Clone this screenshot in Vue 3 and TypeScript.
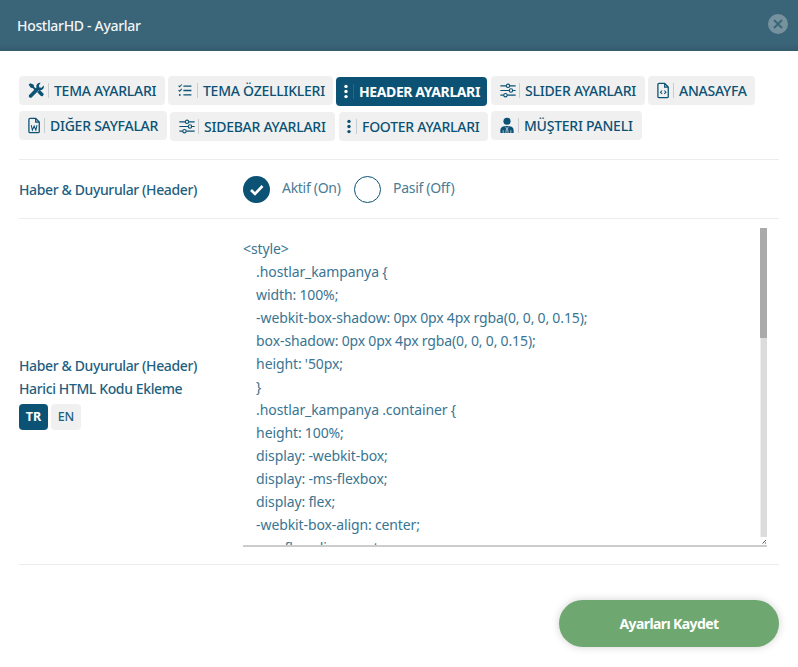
<script setup lang="ts">
interface Tab { label: string; icon: string; width: number; active?: boolean; nudge?: boolean; spaced?: boolean }
const tabs: Tab[] = [
  { label: 'TEMA AYARLARI', icon: 'tools', width: 146 },
  { label: 'TEMA ÖZELLIKLERI', icon: 'list', width: 165 },
  { label: 'HEADER AYARLARI', icon: 'dots', width: 151, active: true, spaced: true },
  { label: 'SLIDER AYARLARI', icon: 'sliders', width: 154 },
  { label: 'ANASAYFA', icon: 'code', width: 107 },
  { label: 'DIĞER SAYFALAR', icon: 'word', width: 148 },
  { label: 'SIDEBAR AYARLARI', icon: 'sliders', width: 165, nudge: true, spaced: true },
  { label: 'FOOTER AYARLARI', icon: 'dots', width: 149, nudge: true },
  { label: 'MÜŞTERI PANELI', icon: 'user', width: 151 },
]
const viewBoxes: Record<string, string> = {
  tools: '0 0 20 20',
  list: '0 0 20 20',
  dots: '8 0 4 20',
  sliders: '1 0 18 20',
  code: '3 0 14 20',
  word: '3 0 14 20',
  user: '2 0 16 20',
}
const code = `<style>
    .hostlar_kampanya {
    width: 100%;
    -webkit-box-shadow: 0px 0px 4px rgba(0, 0, 0, 0.15);
    box-shadow: 0px 0px 4px rgba(0, 0, 0, 0.15);
    height: '50px;
    }
    .hostlar_kampanya .container {
    height: 100%;
    display: -webkit-box;
    display: -ms-flexbox;
    display: flex;
    -webkit-box-align: center;
    -ms-flex-align: center;
    align-items: center;
    -webkit-box-pack: justify;
    -ms-flex-pack: justify;
    justify-content: space-between;
    }
</style>`
</script>

<template>
  <div class="modal">
    <header class="head">
      <span class="title">HostlarHD - Ayarlar</span>
      <button class="close" type="button" aria-label="Kapat">
        <svg viewBox="0 0 20 20" width="20" height="20"><path d="M6 6l8 8M14 6l-8 8" fill="none" stroke="#3a6478" stroke-width="1.800" /></svg>
      </button>
    </header>

    <main class="body">
      <nav class="tabs">
        <button
          v-for="t in tabs"
          :key="t.label"
          type="button"
          class="tab"
          :class="{ active: t.active, nudge: t.nudge, spaced: t.spaced }"
          :style="{ width: t.width + 'px' }"
        >
          <svg class="ico" :class="'ico-' + t.icon" :viewBox="viewBoxes[t.icon]" preserveAspectRatio="xMidYMid meet">
            <g v-if="t.icon === 'tools'" fill="currentColor">
              <path d="M2.800 0.800 0.800 2.800l2.700 3.800 2.300 .3 3 3 1.700-1.700-3-3-.3-2.300z" />
              <path d="M15.800 0.400a4.600 4.600 0 0 0-5.200 5.900L1.400 15.500a2.300 2.300 0 0 0 3.200 3.200l9.200-9.300a4.600 4.600 0 0 0 5.900-5.500l-2.900 2.800-2.600-.6-.6-2.700z" />
              <path d="m11.500 12.300 3.100-3.100 4.300 4.300a2.200 2.200 0 0 1-3.100 3.100z" />
            </g>
            <g v-else-if="t.icon === 'list'" fill="none" stroke="currentColor" stroke-width="1.600">
              <path d="M8 4.500h10M8 10h10M8 15.500h10" />
              <path d="M2 4l1.300 1.300L6 2.500M2 9.500l1.300 1.300L6 8" stroke-width="1.300" />
              <circle cx="3.500" cy="15.500" r="1.200" fill="currentColor" stroke="none" />
            </g>
            <g v-else-if="t.icon === 'dots'" fill="currentColor">
              <circle cx="10" cy="4" r="2" /><circle cx="10" cy="10" r="2" /><circle cx="10" cy="16" r="2" />
            </g>
            <g v-else-if="t.icon === 'sliders'" fill="none" stroke="currentColor" stroke-width="1.300">
              <path d="M1 4.500h7M12 4.500h7M1 10h10.500M15.500 10H19M1 15.500h4M9 15.500h10" />
              <circle cx="10" cy="4.500" r="2" /><circle cx="13.500" cy="10" r="2" /><circle cx="7" cy="15.500" r="2" />
            </g>
            <g v-else-if="t.icon === 'code'">
              <path d="M4 3a1.500 1.500 0 0 1 1.500-1.500H12L16.200 6v11a1.500 1.500 0 0 1-1.500 1.500H5.500A1.500 1.500 0 0 1 4 17zM12 1.500V6h4.200" fill="none" stroke="currentColor" stroke-width="1.500" />
              <path d="M9 10l-2 2 2 2M11.500 10l2 2-2 2" fill="none" stroke="currentColor" stroke-width="1.200" />
            </g>
            <g v-else-if="t.icon === 'word'">
              <path d="M4 3a1.500 1.500 0 0 1 1.500-1.500H12L16.200 6v11a1.500 1.500 0 0 1-1.500 1.500H5.500A1.500 1.500 0 0 1 4 17zM12 1.500V6h4.200" fill="none" stroke="currentColor" stroke-width="1.500" />
              <path d="m6.800 9.500 1.300 6 2.100-4.800 2 4.800 1.300-6" fill="none" stroke="currentColor" stroke-width="1.200" />
            </g>
            <g v-else>
              <circle cx="10" cy="5" r="4.200" fill="currentColor" />
              <path d="M2.200 18.800v-3.300c0-2.600 2.300-4.500 5.300-4.800h5c3 .3 5.300 2.200 5.300 4.800v3.300z" fill="currentColor" />
              <path d="M7.600 11 9.500 13l-.9 5.800M12.400 11 10.500 13l.9 5.800M5.500 15.500v3.300M14.500 15.500v3.300" fill="none" stroke="#f0f0f0" stroke-width="0.800" />
            </g>
          </svg>
          <span class="tab-text">{{ t.label }}</span>
        </button>
      </nav>

      <section class="row row-switch">
        <div class="label">Haber &amp; Duyurular (Header)</div>
        <div class="radios">
          <span class="radio on">
            <svg viewBox="0 0 27 27" width="27" height="27"><path d="m8 14 4 4 7.500-8" fill="none" stroke="#fff" stroke-width="2.600" /></svg>
          </span>
          <span class="radio-text first">Aktif (On)</span>
          <span class="radio"></span>
          <span class="radio-text">Pasif (Off)</span>
        </div>
      </section>

      <section class="row row-code">
        <div class="label-block">
          <div class="label two">Haber &amp; Duyurular (Header)<br />Harici HTML Kodu Ekleme</div>
          <div class="langs">
            <button type="button" class="lang active">TR</button>
            <button type="button" class="lang">EN</button>
          </div>
        </div>
        <div class="code-wrap">
          <textarea class="code" readonly :value="code"></textarea>
          <div class="scrollbar" aria-hidden="true">
            <div class="thumb"></div>
            <div class="track"></div>
            <svg class="grip" viewBox="0 0 7 8" width="7" height="8"><path d="M6 3 2.500 6.500M6 5.500 4.800 6.700" fill="none" stroke="#555" stroke-width="1" /></svg>
          </div>
        </div>
      </section>

      <footer class="foot">
        <button type="button" class="save">Ayarları Kaydet</button>
      </footer>
    </main>
  </div>
</template>

<style scoped>
.modal {
  width: 798px;
  height: 667px;
  background: #fff;
  font-family: "Noto Sans", "Liberation Sans", sans-serif;
  color: #0b5275;
  overflow: hidden;
}
.head {
  height: 51px;
  box-sizing: border-box;
  padding: 0 10px 0 17px;
  display: flex;
  align-items: center;
  justify-content: space-between;
  background: linear-gradient(#3a6478 0, #3a6478 85%, #345b6e 100%);
}
.title {
  color: #f2f5f7;
  font-size: 14px;
  font-weight: 500;
  letter-spacing: -0.32px;
}
.close {
  width: 20px;
  height: 20px;
  padding: 0;
  border: 0;
  border-radius: 50%;
  background: #77929f;
  display: flex;
  position: relative;
  top: -1.5px;
}
.body {
  padding: 25px 19px 0;
}
.tabs {
  display: flex;
  flex-wrap: wrap;
  gap: 5px 3px;
  height: 83px;
  align-content: flex-start;
  border-bottom: 1px solid #ececec;
  width: 760px;
}
.tab {
  height: 29px;
  box-sizing: border-box;
  border: 0;
  border-radius: 4px;
  background: #f0f0f0;
  color: #0b5275;
  display: flex;
  align-items: center;
  justify-content: flex-start;
  padding: 0 0 0 9px;
  font: 500 14px "Noto Sans", sans-serif;
  letter-spacing: -0.25px;
  white-space: nowrap;
}
.tab.active {
  background: #0b5275;
  color: #fff;
  font-weight: 700;
  margin-top: 1px;
  letter-spacing: -0.4px;
}
.tab.nudge {
  margin-top: 1px;
}
.tab.spaced {
  margin-right: 1px;
}
.ico {
  height: 17px;
  flex: none;
}
.ico-tools, .ico-list { width: 16px; margin-right: 4px; }
.ico-sliders { width: 16px; margin-right: 3px; }
.ico-dots { width: 4px; margin: 0 5px 0 -1px; }
.ico-code { width: 12px; margin-right: 4px; }
.ico-word { width: 12px; margin-right: 4px; }
.ico-user { width: 14px; margin-right: 4px; }
.tab-text {
  padding-left: 5px;
  border-left: 1px solid #c8cdd0;
  line-height: 15px;
}
.tab.active .tab-text {
  border-left-color: #2a6584;
}
.row {
  display: flex;
  border-bottom: 1px solid #ececec;
  width: 760px;
}
.row-switch {
  height: 58px;
  align-items: center;
}
.label {
  width: 224px;
  flex: none;
  font-size: 14px;
  font-weight: 500;
  letter-spacing: -0.38px;
  color: #1f5f7f;
}
.radios {
  display: flex;
  align-items: center;
  color: #4a7c96;
  font-size: 14px;
  letter-spacing: -0.3px;
}
.radio {
  width: 27px;
  height: 27px;
  box-sizing: border-box;
  border: 1px solid #0b5275;
  border-radius: 50%;
  display: block;
}
.radio.on {
  background: #0b5275;
  border: 0;
}
.radio-text {
  margin-left: 12px;
  position: relative;
  top: -2px;
}
.radio-text.first {
  width: 72px;
}
.row-code {
  height: 345px;
  align-items: flex-start;
}
.label-block {
  width: 224px;
  flex: none;
  align-self: center;
}
.label.two {
  line-height: 23px;
}
.langs {
  display: flex;
  gap: 3px;
  margin-top: 4px;
}
.lang {
  width: 29px;
  height: 26px;
  padding: 0;
  border: 0;
  border-radius: 4px;
  background: #f0f0f0;
  color: #1f5f7f;
  font: 500 12.5px "Noto Sans", sans-serif;
}
.lang + .lang {
  width: 30px;
}
.lang.active {
  background: #0b5275;
  color: #fff;
  font-weight: 700;
}
.code-wrap {
  position: relative;
  width: 524px;
  margin-top: 9px;
}
.code {
  display: block;
  width: 524px;
  height: 319px;
  box-sizing: border-box;
  padding: 9px 0 0;
  border: 0;
  border-bottom: 2px solid #ccc;
  outline: 0;
  background: #fff;
  color: #3a7592;
  font: 400 14px/23px "Noto Sans", sans-serif;
  letter-spacing: -0.11px;
  word-spacing: -0.25px;
  resize: none;
  overflow: hidden;
  white-space: pre;
}
.scrollbar {
  position: absolute;
  top: 0;
  right: 0;
  bottom: 2px;
  width: 7px;
  display: flex;
  flex-direction: column;
}
.thumb {
  height: 110px;
  background: #aaa;
}
.track {
  flex: 1;
  background: #dcdcdc;
  border-left: 1px solid #eee;
}
.grip {
  display: block;
  flex: none;
}
.foot {
  display: flex;
  justify-content: flex-end;
  width: 760px;
  padding-top: 35px;
}
.save {
  width: 220px;
  height: 47px;
  border: 0;
  border-radius: 24px;
  background: #6ea76f;
  color: #fff;
  font: 700 14px "Noto Sans", sans-serif;
  letter-spacing: -0.6px;
  box-shadow: 0 0 8px rgba(0, 0, 0, 0.18);
}
</style>
